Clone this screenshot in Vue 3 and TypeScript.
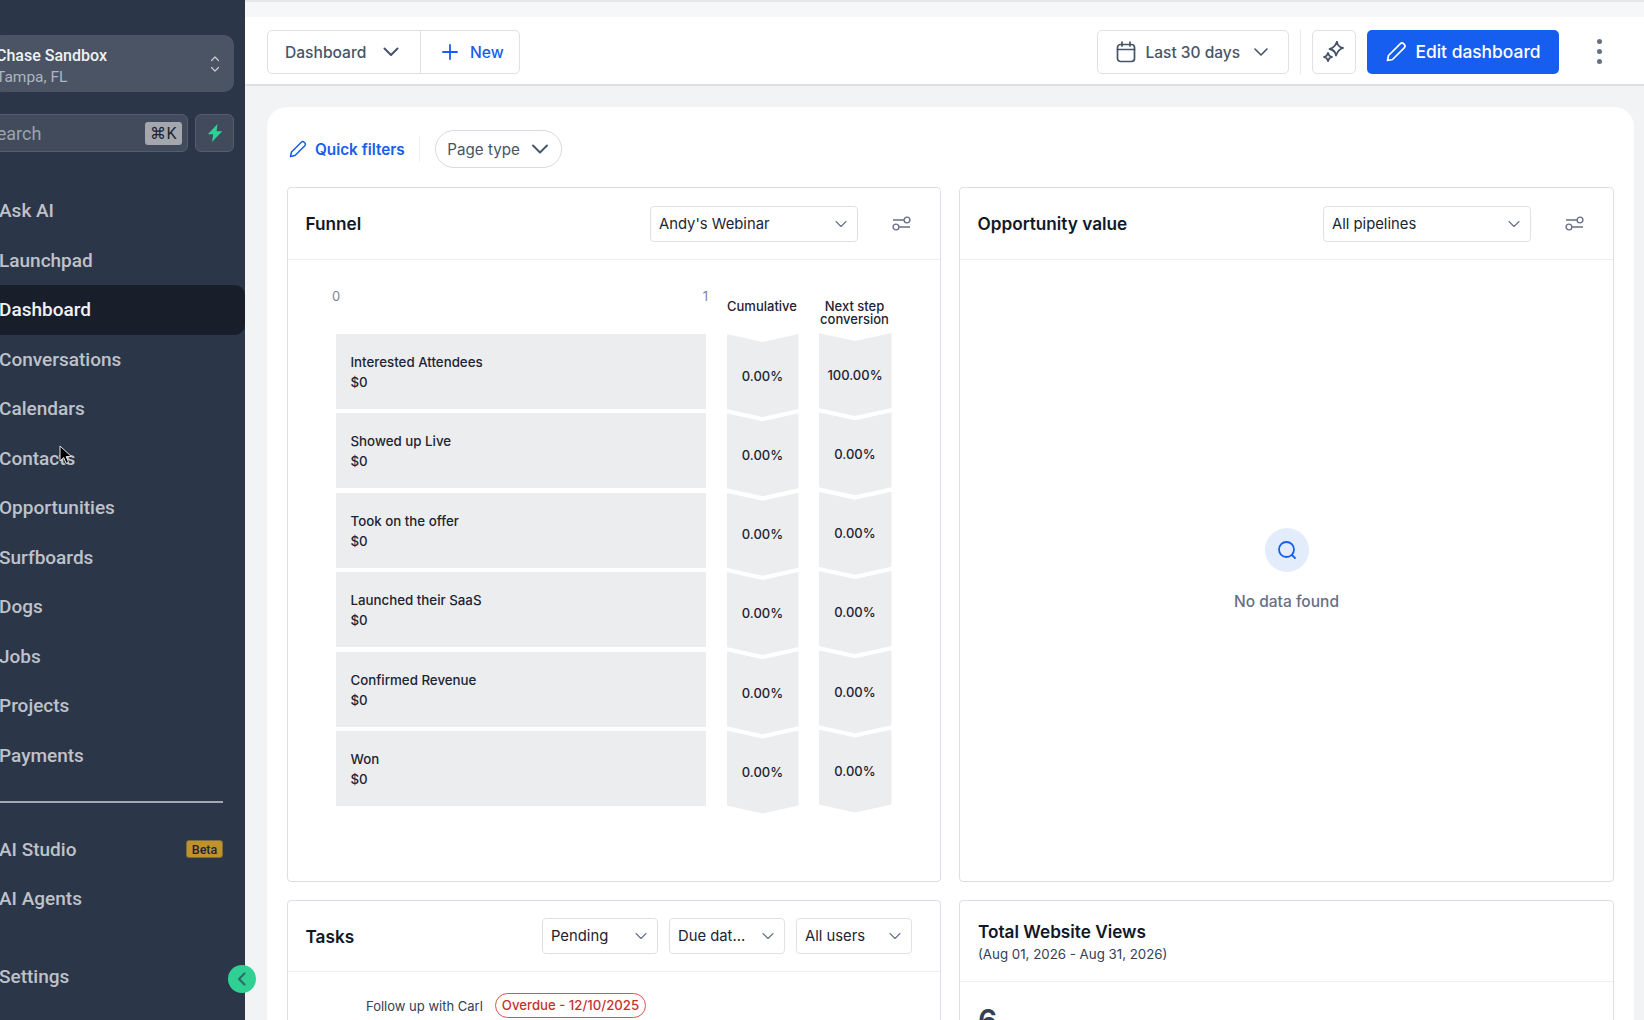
<script setup lang="ts">
const nav: string[] = ['Ask AI','Launchpad','Dashboard','Conversations','Calendars','Contacts','Opportunities','Surfboards','Dogs','Jobs','Projects','Payments']
const stages = [
  { name: 'Interested Attendees', cum: '0.00%', next: '100.00%' },
  { name: 'Showed up Live', cum: '0.00%', next: '0.00%' },
  { name: 'Took on the offer', cum: '0.00%', next: '0.00%' },
  { name: 'Launched their SaaS', cum: '0.00%', next: '0.00%' },
  { name: 'Confirmed Revenue', cum: '0.00%', next: '0.00%' },
  { name: 'Won', cum: '0.00%', next: '0.00%' },
]
</script>

<template>
  <div class="app">
    <aside class="side">
      <div class="loc">
        <div class="loc-text">
          <div class="loc-name">Chase Sandbox</div>
          <div class="loc-city">Tampa, FL</div>
        </div>
        <svg class="loc-arrows" width="12" height="20" viewBox="0 0 12 20" fill="none" stroke="#c9ccd2" stroke-width="1.2" stroke-linecap="round" stroke-linejoin="round"><path d="M2.500 6.500 6 3l3.500 3.500M2.500 13.500 6 17l3.500-3.500"/></svg>
      </div>
      <div class="search-row">
        <div class="search">
          <span class="search-label">Search</span>
          <span class="kbd">⌘K</span>
        </div>
        <div class="flash">
          <svg width="16" height="18" viewBox="0 0 16 18"><path d="M10.500 0 .8 10.200h5.400L5 18l10.200-10.800H9.600z" fill="#2fd096"/></svg>
        </div>
      </div>
      <nav class="nav">
        <div v-for="n in nav" :key="n" class="nav-item" :class="{ active: n === 'Dashboard' }">{{ n }}</div>
      </nav>
      <div class="rule"></div>
      <div class="nav nav-ai">
        <div class="nav-item">AI Studio<span class="beta">Beta</span></div>
        <div class="nav-item">AI Agents</div>
      </div>
      <div class="nav nav-settings">
        <div class="nav-item">Settings</div>
      </div>
    </aside>

    <button class="collapse">
      <svg width="12" height="16" viewBox="0 0 12 16" fill="none" stroke="#2f6b68" stroke-width="2.200" stroke-linecap="round" stroke-linejoin="round"><path d="M8.500 2.500 3 8l5.500 5.500"/></svg>
    </button>
    <svg class="cursor" width="15" height="21" viewBox="0 0 15 21"><path d="M1 1v15l3.700-3.400 2.400 5.700 2.500-1-2.400-5.700H12.500z" fill="#000" stroke="#e8e8e8" stroke-width="1"/></svg>

    <div class="content">
      <div class="strip"></div>
      <header class="top">
        <div class="split">
          <div class="split-a">
            <span class="label">Dashboard</span>
            <svg width="18" height="18" viewBox="0 0 18 18" fill="none" stroke="#475467" stroke-width="2" stroke-linecap="round" stroke-linejoin="round"><path d="M2.500 5.500 9 12l6.500-6.500"/></svg>
          </div>
          <div class="split-b">
            <svg width="18" height="18" viewBox="0 0 18 18" fill="none" stroke="#155eef" stroke-width="1.800" stroke-linecap="round"><path d="M9 2v14M2 9h14"/></svg>
            <span class="label">New</span>
          </div>
        </div>
        <div class="top-right">
          <div class="btn date">
            <svg width="20" height="22" viewBox="0 0 20 22" fill="none" stroke="#475467" stroke-width="1.700" stroke-linecap="round" stroke-linejoin="round"><rect x="1.500" y="3.500" width="17" height="17" rx="3"/><path d="M1.500 8.500h17M6 1v4M14 1v4"/></svg>
            <span class="date-label label">Last 30 days</span>
            <svg width="14" height="14" viewBox="0 0 14 14" fill="none" stroke="#475467" stroke-width="1.600" stroke-linecap="round" stroke-linejoin="round"><path d="M1 4l6 6 6-6"/></svg>
          </div>
          <div class="vr"></div>
          <div class="btn magic">
            <svg width="22" height="22" viewBox="0 0 22 22" fill="none" stroke="#475467" stroke-width="1.800" stroke-linejoin="round"><path d="M14 .5 Q14.400 6 20 7 Q15 8.500 13 14.500 Q12.200 9 6.500 8 Q12 6.500 14 .5z"/><path d="M5 12l1.300 2.700L9 16l-2.700 1.300L5 20l-1.300-2.700L1 16l2.700-1.300z"/></svg>
          </div>
          <div class="btn edit">
            <svg width="22" height="22" viewBox="0 0 22 22" fill="none" stroke="#fff" stroke-width="1.700" stroke-linecap="round" stroke-linejoin="round"><path d="M2.500 19.500l1-5L15.200 2.800a2.500 2.500 0 0 1 3.500 0l.5.500a2.500 2.500 0 0 1 0 3.500L7.500 18.500z"/></svg>
            Edit dashboard
          </div>
          <div class="dots"><i></i><i></i><i></i></div>
        </div>
      </header>

      <main class="main">
        <section class="board">
          <div class="filters">
            <div class="quick">
              <svg width="18" height="18" viewBox="0 0 18 18" fill="none" stroke="#155eef" stroke-width="1.500" stroke-linecap="round" stroke-linejoin="round"><path d="M1.500 16.500l1-4.500L12.300 2.200a2 2 0 0 1 2.900 0l.6.600a2 2 0 0 1 0 2.900L6 15.500z"/></svg>
              Quick filters
            </div>
            <div class="filter-vr"></div>
            <div class="pill">
              Page type
              <svg width="18" height="16" viewBox="0 0 18 16" fill="none" stroke="#475467" stroke-width="1.900" stroke-linecap="round" stroke-linejoin="round"><path d="M2 4.500l7 7 7-7"/></svg>
            </div>
          </div>

          <div class="grid">
            <article class="card funnel-card">
              <div class="card-head">
                <h3>Funnel</h3>
                <div class="select wide">Andy's Webinar
                  <svg width="12" height="12" viewBox="0 0 12 12" fill="none" stroke="#667085" stroke-width="1.100" stroke-linecap="round" stroke-linejoin="round"><path d="M1 3.500l5 5 5-5"/></svg>
                </div>
                <svg class="tune" width="19" height="15" viewBox="0 0 19 15" fill="none" stroke="#667085" stroke-width="1.400"><path d="M1 4h11M7 11h11"/><circle cx="15" cy="4" r="2.900"/><circle cx="4" cy="11" r="2.900"/></svg>
              </div>
              <div class="funnel">
                <div class="funnel-heads">
                  <div class="axis"><span>0</span><span>1</span></div>
                  <div class="col-head">Cumulative</div>
                  <div class="col-head">Next step<br />conversion</div>
                </div>
                <div class="funnel-body">
                  <div class="bars">
                    <div v-for="s in stages" :key="s.name" class="bar">
                      <div>{{ s.name }}</div>
                      <div>$0</div>
                    </div>
                  </div>
                  <div class="chevs">
                    <div v-for="s in stages" :key="s.name" class="chev">{{ s.cum }}</div>
                  </div>
                  <div class="chevs second">
                    <div v-for="s in stages" :key="s.name" class="chev">{{ s.next }}</div>
                  </div>
                </div>
              </div>
            </article>

            <article class="card funnel-card">
              <div class="card-head">
                <h3>Opportunity value</h3>
                <div class="select wide">All pipelines
                  <svg width="12" height="12" viewBox="0 0 12 12" fill="none" stroke="#667085" stroke-width="1.100" stroke-linecap="round" stroke-linejoin="round"><path d="M1 3.500l5 5 5-5"/></svg>
                </div>
                <svg class="tune" width="19" height="15" viewBox="0 0 19 15" fill="none" stroke="#667085" stroke-width="1.400"><path d="M1 4h11M7 11h11"/><circle cx="15" cy="4" r="2.900"/><circle cx="4" cy="11" r="2.900"/></svg>
              </div>
              <div class="empty">
                <div class="empty-icon">
                  <svg width="20" height="20" viewBox="0 0 20 20" fill="none" stroke="#155eef" stroke-width="1.800" stroke-linecap="round"><circle cx="9.500" cy="9.500" r="7.500"/><path d="M15 15l3 3"/></svg>
                </div>
                <div class="empty-text">No data found</div>
              </div>
            </article>

            <article class="card lower">
              <div class="card-head tasks-head">
                <h3>Tasks</h3>
                <div class="tasks-selects">
                  <div class="select">Pending
                    <svg width="12" height="12" viewBox="0 0 12 12" fill="none" stroke="#667085" stroke-width="1.100" stroke-linecap="round" stroke-linejoin="round"><path d="M1 3.500l5 5 5-5"/></svg>
                  </div>
                  <div class="select">Due dat...
                    <svg width="12" height="12" viewBox="0 0 12 12" fill="none" stroke="#667085" stroke-width="1.100" stroke-linecap="round" stroke-linejoin="round"><path d="M1 3.500l5 5 5-5"/></svg>
                  </div>
                  <div class="select">All users
                    <svg width="12" height="12" viewBox="0 0 12 12" fill="none" stroke="#667085" stroke-width="1.100" stroke-linecap="round" stroke-linejoin="round"><path d="M1 3.500l5 5 5-5"/></svg>
                  </div>
                </div>
              </div>
              <div class="task">
                <span class="task-name">Follow up with Carl</span>
                <span class="overdue">Overdue - 12/10/2025</span>
              </div>
            </article>

            <article class="card lower">
              <div class="views-head">
                <h3>Total Website Views</h3>
                <div class="views-sub">(Aug 01, 2026 - Aug 31, 2026)</div>
              </div>
              <div class="views-num">6</div>
            </article>
          </div>
        </section>
      </main>
    </div>
  </div>
</template>

<style>
html, body { margin: 0; overflow: hidden; background: #f2f3f5; }
</style>

<style scoped>
.app { position: relative; display: flex; width: 1644px; height: 1020px; overflow: hidden; font-family: Inter, "Liberation Sans", sans-serif; background: #f2f3f5; }
.side { flex: 0 0 245px; width: 245px; height: 1020px; background: #2b3648; overflow: hidden; font-family: Roboto, "Liberation Sans", sans-serif; display: flex; flex-direction: column; }
.loc { margin: 35px 11px 0 -8px; height: 57px; box-sizing: border-box; border-radius: 10px; background: #4a5464; display: flex; align-items: center; justify-content: space-between; padding: 7px 13px 0 4px; flex: none; }
.loc-arrows { margin-top: -7px; }
.loc-name { font-size: 16px; font-weight: 500; color: #f1f2f4; line-height: 20px; white-space: nowrap; }
.loc-city { font-size: 15.500px; color: #b0b4bc; line-height: 23px; white-space: nowrap; }
.search-row { display: flex; gap: 7px; margin: 22px 11px 0 -30px; height: 38px; flex: none; }
.search { flex: 1; border: 1px solid #535d6c; border-radius: 6px; background: #414b5b; display: flex; align-items: center; justify-content: space-between; padding: 0 5px 0 15px; }
.search-label { font-size: 18px; color: #9ea3ab; }
.kbd { width: 37px; height: 23px; line-height: 23px; text-align: center; border-radius: 3px; background: #a4a7ae; color: #20242c; font-size: 16px; }
.flash { width: 37px; border: 1px solid #535d6c; border-radius: 6px; background: #414b5b; display: flex; align-items: center; justify-content: center; }
.nav { display: flex; flex-direction: column; flex: none; }
.nav > .nav-item { height: 49.500px; }
.nav-item { display: flex; align-items: center; margin-left: -1px; font-size: 19px; font-weight: 500; color: #bfc2c8; white-space: nowrap; position: relative; }
.nav-item.active { background: #181f2b; color: #f1f2f4; border-radius: 0 10px 10px 0; }
.search-row + .nav { margin-top: 34px; }
.rule { height: 2px; width: 223px; background: #a3a7ae; margin-top: 21px; flex: none; }
.nav-ai { margin-top: 21.500px; }
.nav-settings { margin-top: 28px; }
.beta { position: absolute; left: 187px; top: 50%; transform: translateY(-50%); width: 37px; height: 18px; line-height: 17px; text-align: center; box-sizing: border-box; background: #c0922c; border: 1px solid #7f6c3c; border-radius: 3px; color: #1e2533; font-size: 12.500px; }
.collapse { position: absolute; left: 228px; top: 965px; width: 28px; height: 28px; border-radius: 50%; border: 0; padding: 0; background: #30d095; display: flex; align-items: center; justify-content: center; z-index: 3; }
.cursor { position: absolute; left: 59px; top: 445px; z-index: 3; }
.content { flex: 1; min-width: 0; display: flex; flex-direction: column; height: 1020px; }
.strip { height: 15px; flex: none; background: #f6f7f9; border-top: 2px solid #e6e7ea; }
.top { height: 69px; flex: none; box-sizing: border-box; background: #fff; border-bottom: 2px solid #dfe1e7; padding: 12.500px 24px 0 22px; display: flex; justify-content: space-between; align-items: flex-start; }
.label { position: relative; top: 1px; }
.split { display: flex; height: 44px; box-sizing: border-box; border: 1.500px solid #dfe1e7; border-radius: 5px; font-size: 15.600px; font-weight: 500; }
.split-a { width: 153px; display: flex; align-items: center; justify-content: space-between; padding: 0 20px 0 17px; box-sizing: border-box; color: #475467; border-right: 1.500px solid #dfe1e7; }
.split-b { width: 98px; display: flex; align-items: center; gap: 11px; padding-left: 20px; box-sizing: border-box; color: #155eef; }
.top-right { display: flex; align-items: center; height: 44px; }
.btn { height: 44px; box-sizing: border-box; border-radius: 5px; display: flex; align-items: center; font-weight: 500; }
.date { width: 192px; border: 1.500px solid #dfe1e7; padding: 0 20px 0 18px; font-size: 15.500px; color: #475467; }
.date-label { margin-left: 10px; margin-right: auto; }
.vr { width: 1.500px; height: 44px; background: #e8e9ed; margin: 0 11px; }
.magic { width: 44px; justify-content: center; border: 1.500px solid #dfe1e7; margin-right: 11px; }
.edit { width: 192px; justify-content: center; gap: 8px; background: #155eef; color: #fff; font-size: 17.400px; }
.dots { width: 41px; height: 44px; display: flex; flex-direction: column; align-items: center; justify-content: center; gap: 5px; margin-left: 20px; }
.dots i { width: 5px; height: 5px; border-radius: 50%; background: #667085; display: block; }
.main { flex: 1; min-height: 0; padding: 21px 10px 0 22px; overflow: hidden; }
.board { background: #fff; border-radius: 20px 20px 0 0; padding: 23px 20px 0; height: 100%; box-sizing: border-box; overflow: hidden; }
.filters { display: flex; align-items: center; height: 38px; margin-bottom: 19px; }
.quick { display: flex; align-items: center; gap: 8px; font-size: 15.300px; font-weight: 600; color: #155eef; margin-left: 2px; }
.filter-vr { width: 1.500px; height: 26px; background: #eceef1; margin: 0 15px 0 14px; }
.pill { height: 38px; width: 127px; box-sizing: border-box; border: 1.500px solid #d7dae0; border-radius: 19px; display: flex; align-items: center; justify-content: space-between; padding: 0 12px 0 11px; font-size: 15.200px; color: #475467; font-weight: 400; }
.grid { display: grid; grid-template-columns: 654px 655px; grid-template-rows: 695px 200px; gap: 18px; }
.card { box-sizing: border-box; border: 1.500px solid #dcdfe5; border-radius: 4px; background: #fff; min-width: 0; }
.funnel-card { display: flex; flex-direction: column; }
.card-head { flex: none; height: 72px; box-sizing: border-box; display: flex; align-items: center; padding: 0 29px 0 17.500px; border-bottom: 1.500px solid #eceef1; }
h3 { margin: 0; font-size: 17.200px; font-weight: 600; color: #101828; }
.card-head h3 { flex: 1; }
.select { height: 36px; box-sizing: border-box; border: 1.500px solid #dfe1e7; border-radius: 4px; display: flex; align-items: center; justify-content: space-between; padding: 0 10px 0 8px; font-size: 14.800px; color: #1d2433; background: #fff; width: 116px; white-space: nowrap; }
.select.wide { width: 208px; }
.tune { margin-left: 34px; }
.funnel { padding-left: 48px; }
.funnel-heads { height: 74px; display: flex; }
.axis { margin-left: -4px; padding-top: 28px; display: flex; justify-content: space-between; font-size: 13px; color: #7b8494; line-height: 16px; width: 376px; margin-right: 18px; box-sizing: border-box; }
.col-head { width: 72px; margin-right: 20px; padding-top: 40px; text-align: center; font-size: 13px; font-weight: 500; color: #1d2433; line-height: 13px; white-space: nowrap; }
.col-head + .col-head { width: 73px; }
.funnel-body { display: flex; }
.bars { width: 370px; display: flex; flex-direction: column; gap: 4.400px; margin-right: 20.500px; }
.bar { height: 75px; flex: none; background: #ecedef; box-sizing: border-box; padding: 18px 14px 0 14.500px; font-size: 13.300px; line-height: 20px; color: #1d2433; font-weight: 450; }
.chevs { width: 72px; margin-right: 20px; display: flex; flex-direction: column; }
.chevs.second { width: 73px; margin-top: -1px; }
.chev { height: 83px; flex: none; margin-bottom: -3.700px; background: #ecedef; clip-path: polygon(0 0, 50% 8px, 100% 0, 100% 75px, 50% 83px, 0 75px); display: flex; align-items: center; justify-content: center; font-size: 13px; font-weight: 450; color: #1d2433; }
.empty { flex: 1; display: flex; flex-direction: column; align-items: center; padding-top: 268px; }
.empty-icon { width: 44px; height: 44px; border-radius: 50%; background: #e2ecfb; display: flex; align-items: center; justify-content: center; }
.empty-text { margin-top: 20px; font-size: 15.500px; font-weight: 500; color: #667085; }
.tasks-selects { display: flex; gap: 11px; }
.tasks-head { padding-right: 28px; height: 71px; }
.task { display: flex; align-items: center; gap: 12px; padding: 21px 0 0 78px; }
.task-name { font-size: 13px; color: #344054; }
.overdue { height: 25px; box-sizing: border-box; border: 1px solid #d9534f; border-radius: 13px; padding: 0 6px; line-height: 23px; font-size: 13.200px; font-weight: 500; color: #c7322d; white-space: nowrap; }
.views-head { height: 81px; box-sizing: border-box; padding: 20px 18px 0; border-bottom: 1.500px solid #eceef1; }
.views-sub { font-size: 13.300px; color: #344054; margin-top: 4px; }
.views-num { padding: 20px 18px 0; font-size: 30px; font-weight: 600; color: #344054; line-height: 36px; }
</style>
